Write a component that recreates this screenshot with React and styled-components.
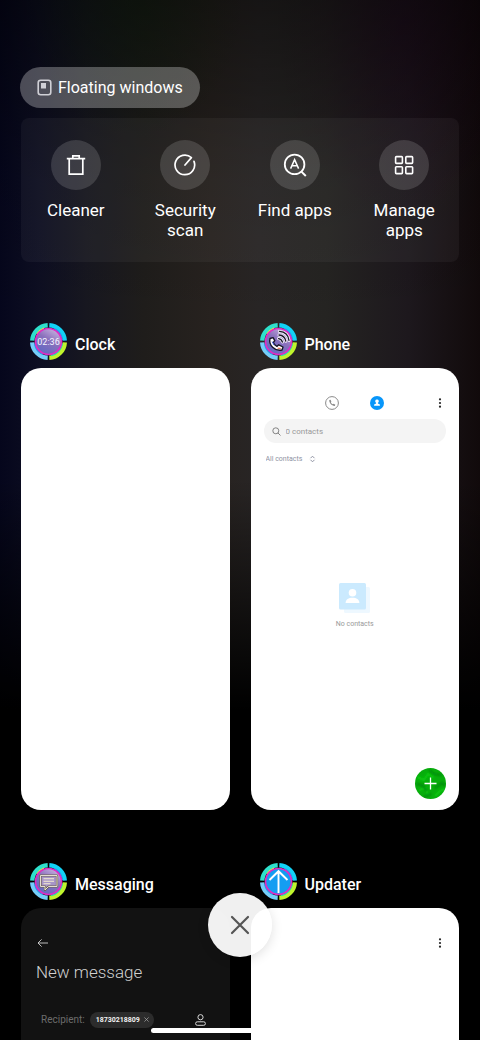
import React, { useId } from 'react'
import styled, { createGlobalStyle } from 'styled-components'

const GlobalStyle = createGlobalStyle`
  *,
  *::before,
  *::after {
    box-sizing: border-box;
  }

  body {
    margin: 0;
    background-color: #000;
    font-family: Roboto, 'Noto Sans', sans-serif;
  }

  button,
  input,
  select {
    margin: 0;
    padding: 0;
    border: 0;
    background: none;
    color: inherit;
    font: inherit;
  }

  svg {
    display: block;
    flex: none;
  }
`

const Screen = styled.main`
  position: relative;
  height: 100vh;
  overflow: hidden;
  color: #fff;
  background:
    linear-gradient(180deg, rgba(0, 0, 0, 0.45) 0, rgba(0, 0, 0, 0.1) 180px, rgba(0, 0, 0, 0) 320px, rgba(0, 0, 0, 0) 480px, #000 710px),
    radial-gradient(ellipse 110px 140px at 28% 0, rgba(14, 40, 14, 0.4), transparent),
    radial-gradient(ellipse 130px 200px at 84% 20px, rgba(36, 2, 32, 0.35), transparent),
    linear-gradient(90deg, #05061c 0, #0d0e22 8%, #171720 18%, #1f1d1b 30%, #27221f 44%, #282525 54%, #252422 68%, #1d181d 85%, #110a0b 100%);
`

const TopBar = styled.header`
  display: flex;
  padding: 67px 20px 10px;
`

const FloatingButton = styled.button`
  display: flex;
  align-items: center;
  gap: 6px;
  height: 41px;
  padding: 0 17px;
  border-radius: 21px;
  background-color: rgba(255, 255, 255, 0.28);
  font-size: 16px;
`

const Tools = styled.nav`
  display: grid;
  grid-template-columns: repeat(4, 1fr);
  margin: 0 21px;
  padding: 22px 0;
  border-radius: 8px;
  background-color: rgba(255, 255, 255, 0.045);
`

const ToolButton = styled.button`
  display: flex;
  flex-direction: column;
  align-items: center;
  gap: 10px;
  padding: 0 12px;
  font-size: 17px;
  line-height: 20px;
`

const ToolIcon = styled.span`
  display: flex;
  align-items: center;
  justify-content: center;
  width: 50px;
  height: 50px;
  border-radius: 50%;
  background-color: rgba(255, 255, 255, 0.14);
`

const Tasks = styled.section`
  display: grid;
  grid-template-columns: 1fr 1fr;
  gap: 53px 21px;
  margin: 61px 21px 0;
`

const TaskHeader = styled.header`
  display: flex;
  gap: 8px;
  padding: 0 9px 8px;
`

const TaskTitle = styled.h2`
  margin: 0;
  padding-top: 12px;
  font-size: 16px;
  font-weight: 500;
  line-height: 20px;
`

const Card = styled.div`
  display: flex;
  flex-direction: column;
  aspect-ratio: 17 / 36;
  padding: 27px 13px 11px;
  border-radius: 20px;
  background-color: ${({ $dark }) => ($dark ? '#121212' : '#fff')};
  color: ${({ $dark }) => ($dark ? '#e0e0e0' : '#222')};
`

const Toolbar = styled.div`
  display: grid;
  grid-template-columns: 1fr auto 1fr;
  align-items: center;
  height: 16px;
`

const Tabs = styled.div`
  display: flex;
  grid-column: 2;
  gap: 31px;
`

const MenuButton = styled.button`
  grid-column: 3;
  justify-self: end;
`

const BackButton = styled.button`
  grid-column: 1;
  justify-self: start;
  padding-left: 2px;
`

const SearchBox = styled.label`
  display: flex;
  align-items: center;
  gap: 5px;
  height: 24px;
  margin-top: 8px;
  padding: 0 8px;
  border-radius: 12px;
  background-color: #f4f4f4;
  color: #888;
`

const SearchInput = styled.input`
  flex: 1;
  min-width: 0;
  font-size: 8px;
  outline: 0;

  &::placeholder {
    color: #999;
    opacity: 1;
  }
`

const GroupFilter = styled.label`
  display: flex;
  align-items: center;
  gap: 6px;
  height: 12px;
  margin-top: 10px;
  padding-left: 2px;
  color: #8f93a3;
`

const GroupSelect = styled.select`
  appearance: none;
  font-size: 7px;
`

const EmptyState = styled.div`
  display: flex;
  flex: 1;
  flex-direction: column;
  align-items: center;
  justify-content: center;
  gap: 4px;
  padding-bottom: 20px;
  color: #999;
  font-size: 7px;
  line-height: 12px;
`

const AddButton = styled.button`
  align-self: flex-end;
  border-radius: 50%;
`

const MessageTitle = styled.h3`
  margin: 11px 0 0;
  padding-left: 2px;
  color: #d0d0d0;
  font-size: 17px;
  font-weight: 300;
  line-height: 20px;
`

const RecipientRow = styled.div`
  display: flex;
  align-items: center;
  gap: 5px;
  margin-top: 30px;
  padding: 0 11px 0 7px;
`

const RecipientLabel = styled.span`
  color: #6c6c6c;
  font-size: 10px;
`

const Chip = styled.button`
  display: flex;
  align-items: center;
  gap: 4px;
  height: 16px;
  margin-right: auto;
  padding: 0 5px 0 6px;
  border-radius: 8px;
  background-color: #2c2c2c;
  color: #f2f2f2;
  font-size: 7px;
  font-weight: 700;
`

const CloseButton = styled.button`
  position: absolute;
  bottom: 83px;
  left: 50%;
  display: flex;
  align-items: center;
  justify-content: center;
  width: 64px;
  height: 64px;
  border-radius: 50%;
  background-color: rgba(255, 255, 255, 0.94);
  box-shadow: 0 3px 12px rgba(0, 0, 0, 0.12);
  transform: translateX(-50%);
`

const HomeIndicator = styled.div`
  position: absolute;
  bottom: 7px;
  left: 50%;
  width: 178px;
  height: 5px;
  border-radius: 3px;
  background-color: #fff;
  transform: translateX(-50%);
`

const FloatingIcon = () => (
  <svg width="15" height="17" viewBox="0 0 15 17" fill="none">
    <rect x="1.2" y="1.2" width="12.600" height="14.600" rx="2.500" stroke="#d0d0d6" strokeWidth="1.600" />
    <rect x="4" y="4" width="5" height="5.500" fill="#d0d0d6" />
  </svg>
)

const CleanerIcon = () => (
  <svg width="22" height="22" viewBox="0 0 22 22" fill="none" stroke="#fff" strokeWidth="1.700">
    <path d="M1.800 4.700h18.400M4.200 4.700v15.500h13.600V4.700M7.800 4.700V1.800h6.400v2.900" />
  </svg>
)

const SecurityIcon = () => (
  <svg width="22" height="22" viewBox="0 0 22 22" fill="none" stroke="#fff" strokeWidth="1.700" strokeLinecap="round">
    <path d="M17.400 3.600A9.800 9.800 0 1 0 20 7.400M11 11l6.400-7.400" />
  </svg>
)

const FindIcon = () => (
  <svg width="24" height="24" viewBox="0 0 24 24" fill="none" stroke="#fff" strokeWidth="1.800">
    <circle cx="11.600" cy="11.400" r="9.800" />
    <path d="M18.400 18.600l4.400 4.400" strokeWidth="2" />
    <path d="M7.600 15.600l4-9 4 9M9 12.800h5.200" strokeWidth="1.500" />
  </svg>
)

const ManageIcon = () => (
  <svg width="20" height="20" viewBox="0 0 20 20" fill="none" stroke="#fff" strokeWidth="1.600">
    <rect x="1.600" y="1.600" width="6.800" height="6.800" rx="0.800" />
    <rect x="11.800" y="1.600" width="6.800" height="6.800" rx="0.800" />
    <rect x="1.600" y="11.800" width="6.800" height="6.800" rx="0.800" />
    <rect x="11.800" y="11.800" width="6.800" height="6.800" rx="0.800" />
  </svg>
)

const CallTabIcon = () => (
  <svg width="14" height="14" viewBox="0 0 14 14" fill="none">
    <circle cx="7" cy="7" r="6.400" stroke="#8a8a8a" strokeWidth="1" />
    <path d="M4.300 4.100c-.4 2.800 2.600 6 5.500 5.800l.5-1.200-1.600-1-.8.600C7 7.900 6.100 7 5.800 6.200l.6-.8-.9-1.700z" fill="#8a8a8a" />
  </svg>
)

const ContactTabIcon = () => (
  <svg width="14" height="14" viewBox="0 0 14 14">
    <circle cx="7" cy="7" r="7" fill="#0896fa" />
    <path d="M7 3.600a1.700 1.700 0 0 1 .9 3.200v.7l2 1v1.300H4.100V8.500l2-1v-.7A1.700 1.700 0 0 1 7 3.600z" fill="#fff" />
  </svg>
)

const MoreIcon = () => (
  <svg width="12" height="12" viewBox="0 0 12 12" fill="#222">
    <circle cx="6" cy="2.300" r="1.100" />
    <circle cx="6" cy="6" r="1.100" />
    <circle cx="6" cy="9.700" r="1.100" />
  </svg>
)

const SearchIcon = () => (
  <svg width="9" height="9" viewBox="0 0 9 9" fill="none" stroke="#777" strokeWidth="0.900">
    <circle cx="3.800" cy="3.800" r="3" />
    <path d="M5.900 5.900l2.600 2.600" />
  </svg>
)

const SortIcon = () => (
  <svg width="7" height="8" viewBox="0 0 7 8" fill="none" stroke="#8f93a3" strokeWidth="1">
    <path d="M1.500 3.200l2-2 2 2M1.500 4.800l2 2 2-2" />
  </svg>
)

const EmptyIcon = () => (
  <svg width="32" height="31" viewBox="0 0 32 31">
    <rect x="5" y="4" width="26" height="26" rx="1.500" fill="#eef8ff" />
    <rect x="0" y="0" width="27" height="26.500" rx="1.500" fill="#cbeafe" />
    <circle cx="13.500" cy="9.800" r="3.800" fill="#fff" />
    <path d="M6.600 20c0-3.400 3-5.200 6.900-5.200s6.900 1.800 6.900 5.200z" fill="#fff" />
  </svg>
)

const AddIcon = () => (
  <svg width="31" height="31" viewBox="0 0 31 31" fill="none">
    <defs>
      <clipPath id="add-clip">
        <circle cx="15.500" cy="15.500" r="15.500" />
      </clipPath>
      <filter id="add-blur">
        <feGaussianBlur stdDeviation="1.200" />
      </filter>
    </defs>
    <g clipPath="url(#add-clip)">
      <rect width="31" height="31" fill="#07ad0c" />
      <g filter="url(#add-blur)" strokeWidth="2">
        <path d="M2 9l7 3 4-6 6 4M20 28l5-5 5-2M4 22l7-2 2 7" stroke="#0bcb10" />
        <path d="M14 2l5 4 8 1M1 16l6 1 5 6M20 20l7-5 4 3M9 29l7-3" stroke="#068a0a" />
      </g>
    </g>
    <path d="M15.500 9.500v12M9.500 15.500h12" stroke="#fff" strokeWidth="1.300" />
  </svg>
)

const BackIcon = () => (
  <svg width="12" height="10" viewBox="0 0 12 10" fill="none" stroke="#d0d0d0" strokeWidth="0.900">
    <path d="M12 5H2M5.600 1.400L2 5l3.600 3.600" />
  </svg>
)

const ChipCloseIcon = () => (
  <svg width="5" height="5" viewBox="0 0 5 5" fill="none" stroke="#aaa" strokeWidth="0.700">
    <path d="M0.400 0.400l4.200 4.200M4.600 0.400L0.400 4.600" />
  </svg>
)

const PersonIcon = () => (
  <svg width="11" height="12" viewBox="0 0 11 12" fill="none" stroke="#d8d8d8">
    <circle cx="5.500" cy="3.200" r="2.600" />
    <rect x="0.600" y="7.800" width="9.800" height="3.500" rx="1.700" />
  </svg>
)

const CloseIcon = () => (
  <svg width="20" height="20" viewBox="0 0 20 20" fill="none" stroke="#555" strokeWidth="2.200" strokeLinecap="round">
    <path d="M2 2l16 16M18 2L2 18" />
  </svg>
)

const AppBadge = ({ flat, children }) => {
  const id = useId()

  return (
    <svg width="37" height="37" viewBox="0 0 37 37" fill="none">
      <defs>
        <linearGradient id={id} x1="0.800" y1="0" x2="0.200" y2="1">
          <stop offset="0" stopColor="#cbb6e2" />
          <stop offset="0.450" stopColor="#8a70bc" />
          <stop offset="1" stopColor="#5c68c4" />
        </linearGradient>
      </defs>
      <g strokeWidth="4.400">
        <path d="M2.200 17.700A16.300 16.300 0 0 1 17.700 2.200" stroke="#2ee0cc" />
        <path d="M19.300 2.200A16.300 16.300 0 0 1 34.800 17.700" stroke="#12d2f6" />
        <path d="M34.800 19.300A16.300 16.300 0 0 1 19.300 34.800" stroke="#c0f42c" />
        <path d="M17.700 34.800A16.300 16.300 0 0 1 2.200 19.300" stroke="#74cdf8" />
      </g>
      <g strokeWidth="1.500">
        <path d="M7 11A14 14 0 0 1 14 5.200" stroke="#e6ee3c" />
        <path d="M25 6A14 14 0 0 1 32.400 17" stroke="#2a9af0" />
        <path d="M32.400 20.500A14 14 0 0 1 21 32.500" stroke="#30dcb0" />
        <path d="M13 31.400A14 14 0 0 1 4.700 21" stroke="#2a96ee" />
      </g>
      <circle cx="18.500" cy="18.500" r="13" fill={flat ? '#149df2' : `url(#${id})`} stroke="#e02cc4" strokeWidth="1.700" />
      {children}
    </svg>
  )
}

const ClockBadge = () => (
  <AppBadge>
    <text x="18.500" y="21.500" fill="#f4f4ff" fontSize="9" textAnchor="middle">
      02:36
    </text>
  </AppBadge>
)

const handset = 'M10 15.500c-1.600 6.500 4.500 13 12 11.500l1-3-4.200-2.200-1.900 1.600c-1.700-.8-3-2.200-3.600-3.900l1.500-1.900-1.700-3z'
const waves = 'M18.600 15.600c2 .3 3.300 1.400 3.800 3.400M19 12c3.800.3 6.200 2.600 6.800 6.200M19.400 8.400c5.600.4 9 3.800 9.600 9'

const PhoneBadge = () => (
  <AppBadge>
    <g strokeLinecap="round" strokeLinejoin="round">
      <path d={handset} fill="#fff" stroke="#191728" strokeWidth="1.400" />
      <path d={waves} stroke="#f4f0fa" strokeWidth="3" />
      <path d={waves} stroke="#191728" strokeWidth="1.300" />
      <path d="M12.400 19l1.400 2.600" stroke="#3c5ae0" />
      <path d="M18 25.200l2.400.2" stroke="#e85a3c" />
    </g>
  </AppBadge>
)

const MessagingBadge = () => (
  <AppBadge>
    <path
      d="M10.500 12.500h16.500v11h-8.500l-3.500 3.500v-3.500h-4.500z"
      fill="#a795c8"
      stroke="#6c6252"
      strokeWidth="2.200"
      strokeLinejoin="round"
    />
    <path d="M10.500 12.500h16.500v11h-8.500l-3.500 3.500v-3.500h-4.500z" stroke="#f2ecdc" strokeWidth="0.900" />
    <path d="M13.500 15.800h10.500M13.500 18.300h10.500M13.500 20.800h7" stroke="#f6efcf" strokeWidth="1.100" />
  </AppBadge>
)

const UpdaterBadge = () => (
  <AppBadge flat>
    <path d="M18.500 30V8.500M9.500 17l9-8.800 9 8.800" stroke="#fff" strokeWidth="1.900" />
  </AppBadge>
)

const tools = [
  { label: 'Cleaner', Icon: CleanerIcon },
  { label: 'Security scan', Icon: SecurityIcon },
  { label: 'Find apps', Icon: FindIcon },
  { label: 'Manage apps', Icon: ManageIcon },
]

const Task = ({ title, Badge, dark, children }) => (
  <article>
    <TaskHeader>
      <Badge />
      <TaskTitle>{title}</TaskTitle>
    </TaskHeader>
    <Card $dark={dark}>{children}</Card>
  </article>
)

const MoreButton = () => (
  <MenuButton type="button" aria-label="More options">
    <MoreIcon />
  </MenuButton>
)

const PhonePreview = () => (
  <>
    <Toolbar>
      <Tabs>
        <button type="button" aria-label="Calls">
          <CallTabIcon />
        </button>
        <button type="button" aria-label="Contacts">
          <ContactTabIcon />
        </button>
      </Tabs>
      <MoreButton />
    </Toolbar>
    <SearchBox>
      <SearchIcon />
      <SearchInput type="text" placeholder="0 contacts" aria-label="Search contacts" />
    </SearchBox>
    <GroupFilter>
      <GroupSelect aria-label="Contact group">
        <option>All contacts</option>
      </GroupSelect>
      <SortIcon />
    </GroupFilter>
    <EmptyState>
      <EmptyIcon />
      No contacts
    </EmptyState>
    <AddButton type="button" aria-label="Add contact">
      <AddIcon />
    </AddButton>
  </>
)

const MessagingPreview = () => (
  <>
    <Toolbar>
      <BackButton type="button" aria-label="Back">
        <BackIcon />
      </BackButton>
    </Toolbar>
    <MessageTitle>New message</MessageTitle>
    <RecipientRow>
      <RecipientLabel>Recipient:</RecipientLabel>
      <Chip type="button">
        18730218809
        <ChipCloseIcon />
      </Chip>
      <button type="button" aria-label="Choose contact">
        <PersonIcon />
      </button>
    </RecipientRow>
  </>
)

const App = () => (
  <>
    <GlobalStyle />
    <Screen>
      <TopBar>
        <FloatingButton type="button">
          <FloatingIcon />
          Floating windows
        </FloatingButton>
      </TopBar>
      <Tools>
        {tools.map(({ label, Icon }) => (
          <ToolButton key={label} type="button">
            <ToolIcon>
              <Icon />
            </ToolIcon>
            {label}
          </ToolButton>
        ))}
      </Tools>
      <Tasks>
        <Task title="Clock" Badge={ClockBadge} />
        <Task title="Phone" Badge={PhoneBadge}>
          <PhonePreview />
        </Task>
        <Task title="Messaging" Badge={MessagingBadge} dark>
          <MessagingPreview />
        </Task>
        <Task title="Updater" Badge={UpdaterBadge}>
          <Toolbar>
            <MoreButton />
          </Toolbar>
        </Task>
      </Tasks>
      <CloseButton type="button" aria-label="Close all">
        <CloseIcon />
      </CloseButton>
      <HomeIndicator />
    </Screen>
  </>
)

export default App
